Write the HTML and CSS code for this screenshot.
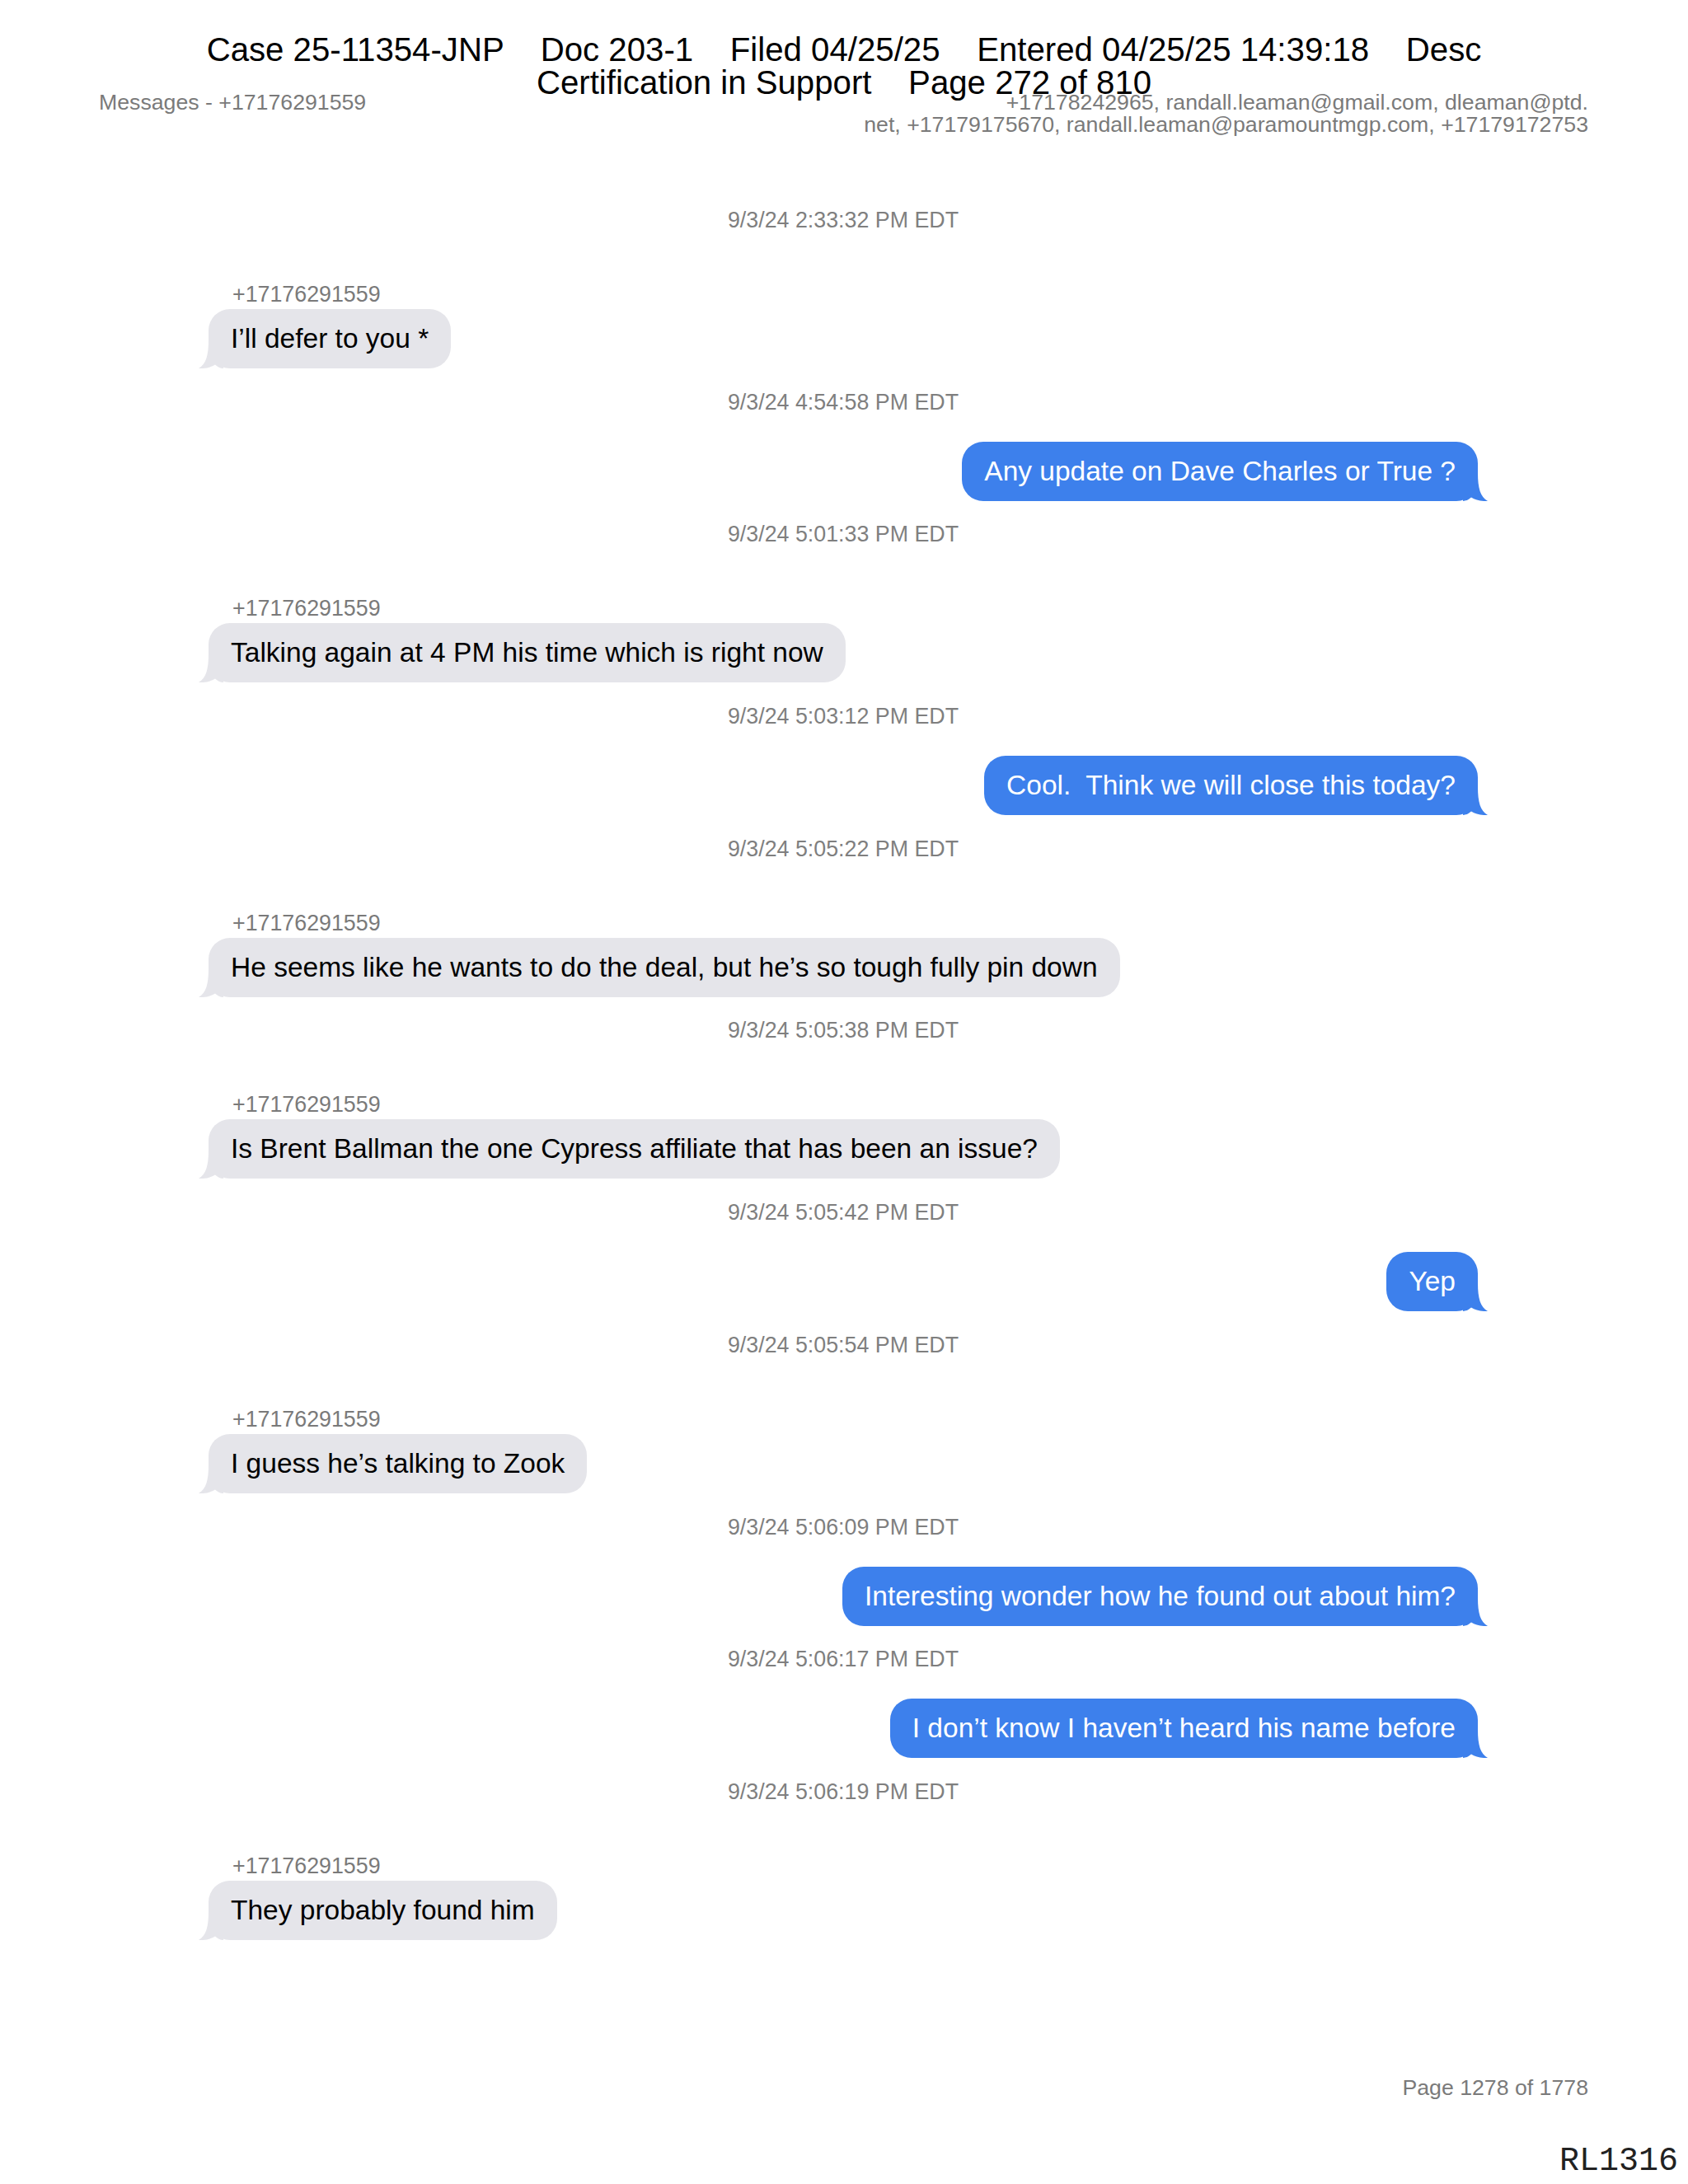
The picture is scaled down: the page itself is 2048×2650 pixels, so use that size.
FILE: index.html
```html
<!DOCTYPE html>
<html lang="en">
<head>
<meta charset="utf-8">
<title>Messages - +17176291559</title>
<link rel="stylesheet" href="styles.css">
</head>
<body>
<div class="page">
  <div class="stamp">
    <div class="stamp-line">Case 25-11354-JNP    Doc 203-1    Filed 04/25/25    Entered 04/25/25 14:39:18    Desc</div>
    <div class="stamp-line">Certification in Support    Page 272 of 810</div>
  </div>

  <header class="doc-header">
    <div class="doc-title">Messages - +17176291559</div>
    <div class="doc-participants">+17178242965, randall.leaman@gmail.com, dleaman@ptd.<br>net, +17179175670, randall.leaman@paramountmgp.com, +17179172753</div>
  </header>

  <main class="thread">
    <div class="ts first">9/3/24 2:33:32 PM EDT</div>
    <div class="msg in">
      <div class="sender">+17176291559</div>
      <div class="bubble">I’ll defer to you *<svg class="tail" viewBox="0 0 30 34" width="30" height="34"><path d="M0 0H18C18 18 21 29 30 34C22 34.5 15 32.5 10 29.5C7 32 4 34 0 34Z"/></svg></div>
    </div>

    <div class="ts">9/3/24 4:54:58 PM EDT</div>
    <div class="msg out">
      <div class="bubble">Any update on Dave Charles or True ?<svg class="tail" viewBox="0 0 30 34" width="30" height="34"><path d="M0 0H18C18 18 21 29 30 34C22 34.5 15 32.5 10 29.5C7 32 4 34 0 34Z"/></svg></div>
    </div>

    <div class="ts">9/3/24 5:01:33 PM EDT</div>
    <div class="msg in">
      <div class="sender">+17176291559</div>
      <div class="bubble">Talking again at 4 PM his time which is right now<svg class="tail" viewBox="0 0 30 34" width="30" height="34"><path d="M0 0H18C18 18 21 29 30 34C22 34.5 15 32.5 10 29.5C7 32 4 34 0 34Z"/></svg></div>
    </div>

    <div class="ts">9/3/24 5:03:12 PM EDT</div>
    <div class="msg out">
      <div class="bubble">Cool.  Think we will close this today?<svg class="tail" viewBox="0 0 30 34" width="30" height="34"><path d="M0 0H18C18 18 21 29 30 34C22 34.5 15 32.5 10 29.5C7 32 4 34 0 34Z"/></svg></div>
    </div>

    <div class="ts">9/3/24 5:05:22 PM EDT</div>
    <div class="msg in">
      <div class="sender">+17176291559</div>
      <div class="bubble">He seems like he wants to do the deal, but he’s so tough fully pin down<svg class="tail" viewBox="0 0 30 34" width="30" height="34"><path d="M0 0H18C18 18 21 29 30 34C22 34.5 15 32.5 10 29.5C7 32 4 34 0 34Z"/></svg></div>
    </div>

    <div class="ts">9/3/24 5:05:38 PM EDT</div>
    <div class="msg in">
      <div class="sender">+17176291559</div>
      <div class="bubble">Is Brent Ballman the one Cypress affiliate that has been an issue?<svg class="tail" viewBox="0 0 30 34" width="30" height="34"><path d="M0 0H18C18 18 21 29 30 34C22 34.5 15 32.5 10 29.5C7 32 4 34 0 34Z"/></svg></div>
    </div>

    <div class="ts">9/3/24 5:05:42 PM EDT</div>
    <div class="msg out">
      <div class="bubble">Yep<svg class="tail" viewBox="0 0 30 34" width="30" height="34"><path d="M0 0H18C18 18 21 29 30 34C22 34.5 15 32.5 10 29.5C7 32 4 34 0 34Z"/></svg></div>
    </div>

    <div class="ts">9/3/24 5:05:54 PM EDT</div>
    <div class="msg in">
      <div class="sender">+17176291559</div>
      <div class="bubble">I guess he’s talking to Zook<svg class="tail" viewBox="0 0 30 34" width="30" height="34"><path d="M0 0H18C18 18 21 29 30 34C22 34.5 15 32.5 10 29.5C7 32 4 34 0 34Z"/></svg></div>
    </div>

    <div class="ts">9/3/24 5:06:09 PM EDT</div>
    <div class="msg out">
      <div class="bubble">Interesting wonder how he found out about him?<svg class="tail" viewBox="0 0 30 34" width="30" height="34"><path d="M0 0H18C18 18 21 29 30 34C22 34.5 15 32.5 10 29.5C7 32 4 34 0 34Z"/></svg></div>
    </div>

    <div class="ts">9/3/24 5:06:17 PM EDT</div>
    <div class="msg out">
      <div class="bubble">I don’t know I haven’t heard his name before<svg class="tail" viewBox="0 0 30 34" width="30" height="34"><path d="M0 0H18C18 18 21 29 30 34C22 34.5 15 32.5 10 29.5C7 32 4 34 0 34Z"/></svg></div>
    </div>

    <div class="ts">9/3/24 5:06:19 PM EDT</div>
    <div class="msg in">
      <div class="sender">+17176291559</div>
      <div class="bubble">They probably found him<svg class="tail" viewBox="0 0 30 34" width="30" height="34"><path d="M0 0H18C18 18 21 29 30 34C22 34.5 15 32.5 10 29.5C7 32 4 34 0 34Z"/></svg></div>
    </div>
  </main>

  <footer class="doc-footer">
    <div class="page-num">Page 1278 of 1778</div>
    <div class="bates">RL1316</div>
  </footer>
</div>
</body>
</html>
```

FILE: styles.css
```css
* { box-sizing: border-box; }

html, body {
  margin: 0;
  padding: 0;
  background: #ffffff;
}

body {
  font-family: "Liberation Sans", Arial, sans-serif;
}

.page {
  position: relative;
  width: 2048px;
  height: 2650px;
  display: flex;
  flex-direction: column;
  padding-bottom: 7px;
}

.stamp {
  position: absolute;
  top: 41px;
  left: 0;
  right: 0;
  text-align: center;
  font-size: 40.2px;
  line-height: 40px;
  color: #000;
  z-index: 2;
}

.stamp-line {
  white-space: pre;
}

.doc-header {
  display: flex;
  justify-content: space-between;
  align-items: flex-start;
  padding: 111px 121px 0 120px;
  font-size: 26.7px;
  line-height: 27px;
  color: #7a7a7a;
}

.doc-participants {
  text-align: right;
}

.thread {
  flex: 1;
  display: flex;
  flex-direction: column;
  padding: 87px 255px 0 253px;
}

.ts {
  text-align: center;
  font-size: 26.8px;
  line-height: 30px;
  height: 30px;
  color: #7f7f7f;
  margin-top: 25.7px;
}

.ts.first {
  margin-top: 0;
}

.msg {
  display: flex;
  flex-direction: column;
}

.msg.in {
  align-items: flex-start;
  margin-top: 60px;
}

.msg.out {
  align-items: flex-end;
  margin-top: 33px;
}

.sender {
  font-size: 26.8px;
  line-height: 30px;
  color: #7a7a7a;
  padding-left: 29px;
  margin-bottom: 3px;
}

.bubble {
  position: relative;
  font-size: 33.5px;
  line-height: 40px;
  padding: 16px 27px;
  border-radius: 26px;
  white-space: pre;
}

.msg.in .bubble {
  background: #e5e5ea;
  color: #000;
}

.msg.out .bubble {
  background: #3d80ec;
  color: #fff;
}

.tail {
  position: absolute;
  bottom: 0;
  width: 30px;
  height: 34px;
  display: block;
}

.msg.out .tail {
  right: -12px;
  fill: #3d80ec;
}

.msg.in .tail {
  left: -12px;
  fill: #e5e5ea;
  transform: scaleX(-1);
}

.doc-footer {
  display: flex;
  flex-direction: column;
  align-items: flex-end;
}

.page-num {
  font-size: 26.7px;
  line-height: 27px;
  color: #7a7a7a;
  padding-right: 121px;
}

.bates {
  margin-top: 56px;
  font-family: "Liberation Mono", "Courier New", monospace;
  font-size: 40px;
  line-height: 40px;
  color: #222;
  padding-right: 12px;
}
```
